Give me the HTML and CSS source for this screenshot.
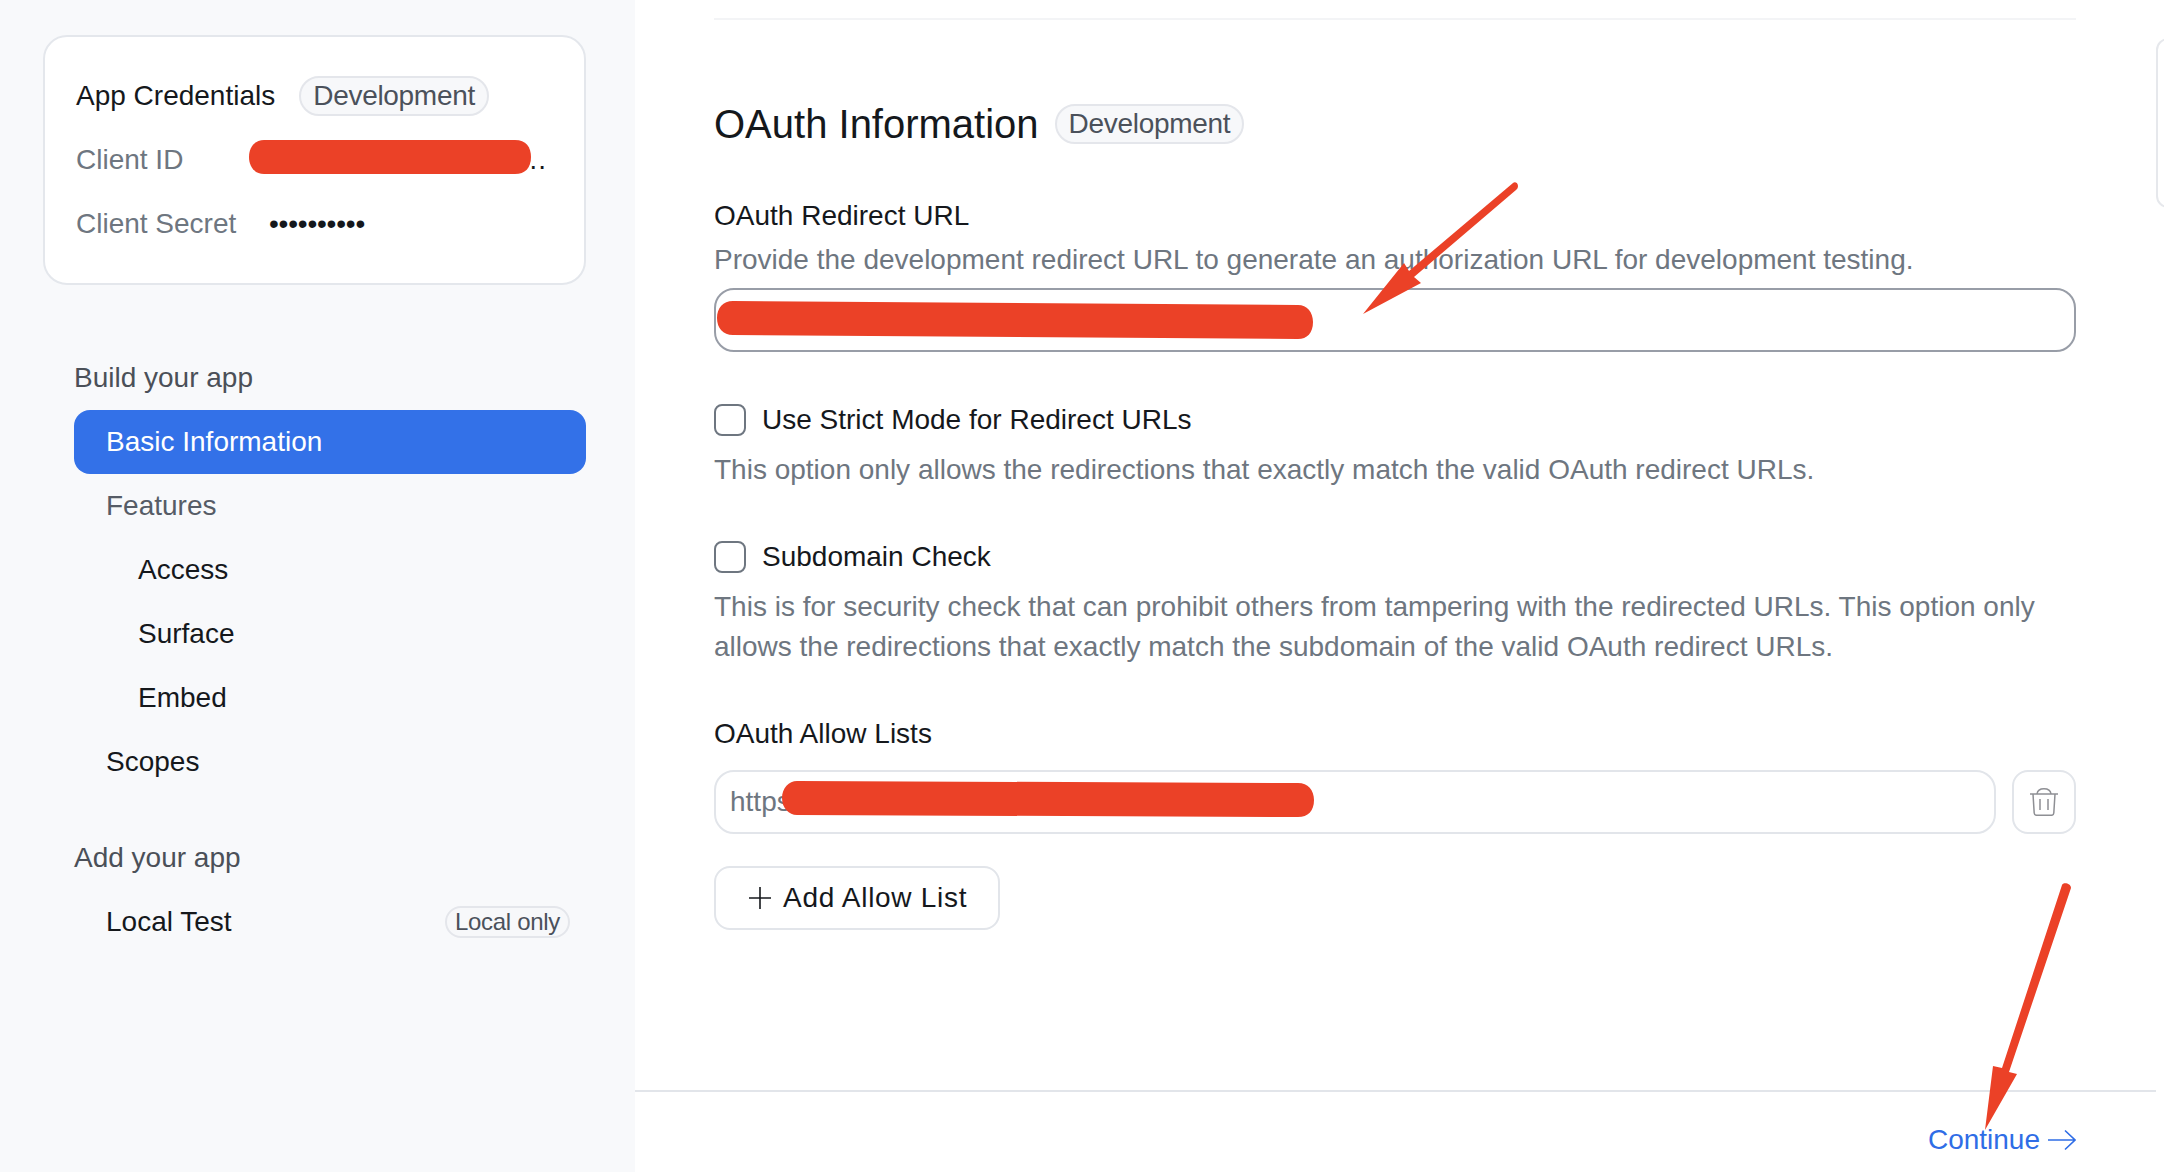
FILE: index.html
```html
<!DOCTYPE html>
<html>
  <head>
    <meta charset="utf-8">
    <title>OAuth Information</title>
    <link rel="stylesheet" href="styles.css">
  </head>
  <body>
    <div class="page">
      <div class="sidebar">
        <div class="cred-card">
          <div class="cred-row">
            <span class="cred-title">App Credentials</span>
            <span class="badge">Development</span>
          </div>
          <div class="cred-row">
            <span class="cred-label">Client ID</span>
            <span class="cred-value">xxxxxxxxxxxxxxxxxx…</span>
          </div>
          <div class="cred-row">
            <span class="cred-label">Client Secret</span>
            <span class="cred-secret">••••••••••</span>
          </div>
        </div>

        <div class="nav-group">
          <div class="nav-head">Build your app</div>
          <a class="nav-item active">Basic Information</a>
          <a class="nav-item muted">Features</a>
          <a class="nav-item sub">Access</a>
          <a class="nav-item sub">Surface</a>
          <a class="nav-item sub">Embed</a>
          <a class="nav-item">Scopes</a>
        </div>
        <div class="nav-group second">
          <div class="nav-head">Add your app</div>
          <a class="nav-item">Local Test <span class="badge small">Local only</span></a>
        </div>
      </div>

      <div class="main">
        <div class="content">
          <div class="top-line"></div>

          <div class="title-row">
            <h1>OAuth Information</h1>
            <span class="badge">Development</span>
          </div>

          <div class="field-label first">OAuth Redirect URL</div>
          <div class="help">Provide the development redirect URL to generate an authorization URL for development testing.</div>
          <input class="text-input dark" type="text" value="https://">

          <label class="check-row strict">
            <span class="check"></span>
            Use Strict Mode for Redirect URLs
          </label>
          <div class="help gap">This option only allows the redirections that exactly match the valid OAuth redirect URLs.</div>

          <label class="check-row sub-check">
            <span class="check"></span>
            Subdomain Check
          </label>
          <div class="help gap">This is for security check that can prohibit others from tampering with the redirected URLs. This option only allows the redirections that exactly match the subdomain of the valid OAuth redirect URLs.</div>

          <div class="field-label allow">OAuth Allow Lists</div>
          <div class="allow-row">
            <input class="text-input" type="text" value="https://">
            <button class="trash-btn">
              <svg width="28" height="28" viewBox="0 0 28 28" fill="none" stroke="#8e8f94" stroke-width="1.5">
                <path d="M0 6H28"/>
                <path d="M7 6C7.5 2.2 9.5 .8 14 .8S20.5 2.2 21 6"/>
                <path d="M3 6L4.2 25C4.3 26.6 5.2 27.3 6.6 27.3H21.4C22.8 27.3 23.7 26.6 23.8 25L25 6"/>
                <path d="M10 11V22M18 11V22"/>
              </svg>
            </button>
          </div>
          <button class="add-btn">
            <svg width="24" height="24" viewBox="0 0 24 24" stroke="#16181c" stroke-width="1.6">
              <path d="M12 1V23M1 12H23"/>
            </svg>
            Add Allow List
          </button>
        </div>

        <div class="footer">
          <a class="continue">
            Continue
            <svg width="28" height="22" viewBox="0 0 28 22" fill="none" stroke="#2f6de6" stroke-width="1.6">
              <path d="M0 11H27M17 1.5L27 11L17 20.5"/>
            </svg>
          </a>
        </div>
      </div>

      <div class="rail"><div class="rail-card"></div></div>
    </div>

    <!-- red marks drawn over the screenshot -->
    <svg class="marks" width="2164" height="1172" viewBox="0 0 2164 1172" fill="#eb4127">
      <path d="M264 140H515C526 140 531 147 531 157C531 168 525 174 515 174H264C255 174 249 167 249 157C249 147 255 140 264 140Z"/>
      <path d="M733 301L1298 305C1307 305 1313 312 1313 322C1313 333 1307 339 1298 339L733 335C723 335 717 328 717 318C717 308 723 301 733 301Z"/>
      <path d="M797 781L1298 783C1308 783 1314 790 1314 800C1314 811 1308 817 1298 817L797 815C789 815 782 808 782 798C782 788 789 781 797 781Z"/>
      <path d="M1513 183C1515 181 1518 183 1518 186C1518 188 1517 189 1516 190L1414 277L1421 283L1363 314L1404 263L1409 271Z"/>
      <path d="M2062 885C2063 882 2071 883 2071 888L2009 1072L2017 1074L1985 1130L1993 1066L2002 1068Z"/>
    </svg>
  </body>
</html>
```

FILE: styles.css
```css
* {margin: 0;padding: 0;box-sizing: border-box;}
html, body {height: 100%;}
body {
  position: relative;
  overflow: hidden;
  background: #fff;
  color: #15181c;
  font-family: "Liberation Sans", Arial, sans-serif;
  font-size: 28px;
  line-height: 40px;
}

.page {display: flex;height: 1172px;}

/* sidebar */
.sidebar {width: 635px;flex: none;padding: 35px 49px 0 43px;background: #f8f9fb;}
.cred-card {
  height: 250px;
  padding: 27px 24px 27px 31px;
  background: #fff;
  border: 2px solid #e4e7ec;
  border-radius: 24px;
}
.cred-row {display: flex;align-items: center;height: 64px;}
.cred-title {margin-right: 24px;}
.cred-label {width: 193px;flex: none;color: #6e7680;}
.cred-value {letter-spacing: -.1px;white-space: nowrap;}
.cred-secret {letter-spacing: -.2px;}

.badge {
  display: inline-block;
  height: 40px;
  padding: 0 12px;
  color: #4b515b;
  line-height: 36px;
  letter-spacing: -.3px;
  white-space: nowrap;
  background: #f7f8fa;
  border: 2px solid #e4e6eb;
  border-radius: 20px;
}
.badge.small {height: 32px;padding: 0 8px;font-size: 24px;line-height: 28px;}

.nav-group {margin-top: 61px;padding-left: 31px;}
.nav-group.second {margin-top: 32px;}
.nav-head {height: 64px;color: #4b5058;line-height: 64px;}
.nav-item {
  display: flex;
  align-items: center;
  justify-content: space-between;
  height: 64px;
  padding: 0 16px 0 32px;
  border-radius: 16px;
}
.nav-item.active {color: #fff;background: #3371e8;}
.nav-item.muted {color: #565c66;}
.nav-item.sub {padding-left: 64px;}

/* main column */
.main {display: flex;flex-direction: column;flex: 1;min-width: 0;}
.content {flex: 1;padding: 18px 80px 0 79px;}
.top-line {height: 2px;background: #f3f4f6;}

.title-row {display: flex;align-items: center;gap: 16px;height: 60px;margin-top: 74px;}
h1 {font-size: 40px;font-weight: normal;line-height: 60px;}

.field-label.first {margin-top: 42px;}
.field-label.allow {margin-top: 47px;}
.help {margin-top: 4px;color: #6e7680;}
.help.gap {margin-top: 10px;}

.text-input {
  display: block;
  width: 100%;
  height: 64px;
  padding: 0 14px;
  color: #6e7680;
  font: inherit;
  background: #fff;
  border: 2px solid #e2e5ea;
  border-radius: 20px;
  outline: none;
}
.text-input.dark {margin-top: 8px;border-color: #989da7;}

.check-row {display: flex;align-items: center;gap: 16px;height: 40px;}
.check-row.strict {margin-top: 48px;}
.check-row.sub-check {margin-top: 47px;}
.check {
  width: 32px;
  height: 32px;
  background: #fff;
  border: 2px solid #6e7680;
  border-radius: 8px;
}

.allow-row {display: flex;gap: 16px;margin-top: 16px;}
.allow-row .text-input {flex: 1;}
.trash-btn {
  display: flex;
  align-items: center;
  justify-content: center;
  width: 64px;
  height: 64px;
  flex: none;
  background: #fff;
  border: 2px solid #e2e5ea;
  border-radius: 16px;
}
.add-btn {
  display: flex;
  align-items: center;
  gap: 11px;
  height: 64px;
  margin-top: 32px;
  padding: 0 31px 0 32px;
  color: #15181c;
  font: inherit;
  letter-spacing: .7px;
  background: #fff;
  border: 2px solid #e2e5ea;
  border-radius: 16px;
}

.footer {
  display: flex;
  justify-content: flex-end;
  height: 82px;
  padding: 28px 80px 0 0;
  border-top: 2px solid #e2e5ea;
}
.continue {display: flex;align-items: center;gap: 8px;height: 40px;color: #2f6de6;}

/* edge of the next card, cut off by the window */
.rail {width: 8px;flex: none;padding-top: 38px;}
.rail-card {
  width: 24px;
  height: 170px;
  border: 2px solid #e6e8ec;
  border-radius: 24px;
}

.marks {position: absolute;left: 0;top: 0;pointer-events: none;}
```
